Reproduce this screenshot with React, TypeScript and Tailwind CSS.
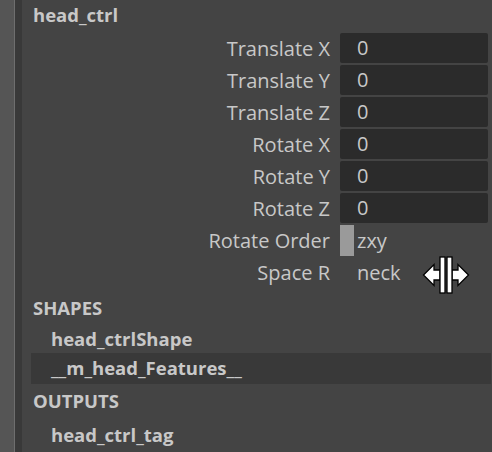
import React from 'react';

const font = { fontFamily: '"Open Sans", "Noto Sans", sans-serif' };

const fields = ['Translate X', 'Translate Y', 'Translate Z', 'Rotate X', 'Rotate Y', 'Rotate Z'];

function ResizeCursor() {
  return (
    <svg width="48" height="38" viewBox="0 0 48 38" className="absolute left-[422px] top-[256px]">
      {/* left arrow */}
      <path d="M1.5 19 L12 8.5 L12 14 L18 14 L18 24 L12 24 L12 29.5 Z" fill="#fff" stroke="#000" strokeWidth="1.3" />
      {/* right arrow */}
      <path d="M46.5 19 L36 8.5 L36 14 L30 14 L30 24 L36 24 L36 29.5 Z" fill="#fff" stroke="#000" strokeWidth="1.3" />
      {/* bars */}
      <rect x="18" y="1" width="5" height="36" fill="#fff" stroke="#000" strokeWidth="1.3" />
      <rect x="25" y="1" width="5" height="36" fill="#fff" stroke="#000" strokeWidth="1.3" />
    </svg>
  );
}

export default function App() {
  return (
    <div className="relative flex h-[452px] w-[492px] overflow-hidden bg-[#444444]" style={font}>
      {/* left docking strip */}
      <div className="w-[14px] shrink-0 bg-[#555555]" />
      <div className="w-px shrink-0 bg-[#6e6e6e]" />
      <div className="w-[7px] shrink-0 bg-[#393939]" />

      <div className="flex flex-1 flex-col pr-[4px] text-[#c8c8c8]">
        <div className="flex h-[33px] items-center pl-[11px] pb-[3px] text-[18.5px] font-bold leading-none">
          head_ctrl
        </div>

        {fields.map((f) => (
          <div key={f} className="flex h-[32px] items-stretch">
            <div className="flex w-[318px] items-center justify-end pr-[10px] text-[20px] leading-none">
              {f}
            </div>
            <div className="mb-[2px] flex flex-1 items-center rounded-[2px] bg-[#2b2b2b] pl-[17px] text-[20px] leading-none">
              0
            </div>
          </div>
        ))}

        <div className="flex h-[32px] items-stretch">
          <div className="flex w-[318px] items-center justify-end pr-[10px] text-[20px] leading-none">
            Rotate Order
          </div>
          <div className="mb-[1px] w-[14px] bg-[#9a9a9a]" />
          <div className="flex items-center pl-[3px] text-[20px] leading-none">zxy</div>
        </div>

        <div className="flex h-[32px] items-stretch">
          <div className="flex w-[318px] items-center justify-end pr-[10px] text-[20px] leading-none">
            Space R
          </div>
          <div className="flex items-center pl-[17px] text-[20px] leading-none">neck</div>
        </div>

        <div className="flex h-[36px] items-center pl-[11px] pt-[2px] text-[18.5px] font-bold leading-none">
          SHAPES
        </div>
        <div className="flex h-[28px] items-center pl-[29px] text-[18.5px] font-bold leading-none">
          head_ctrlShape
        </div>
        <div className="ml-[9px] -mr-[3px] flex h-[31px] items-center bg-[#393939] pl-[20px] text-[18.5px] font-bold leading-none">
          __m_head_Features__
        </div>
        <div className="flex h-[35px] items-center pl-[11px] text-[18.5px] font-bold leading-none">
          OUTPUTS
        </div>
        <div className="flex h-[32px] items-center pl-[29px] text-[18.5px] font-bold leading-none">
          head_ctrl_tag
        </div>
      </div>

      <ResizeCursor />
    </div>
  );
}
